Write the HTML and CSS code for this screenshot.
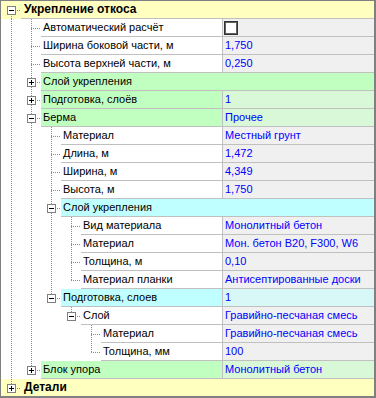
FILE: index.html
```html
<!DOCTYPE html>
<html lang="ru">
<head>
<meta charset="utf-8">
<title>Укрепление откоса</title>
<link rel="stylesheet" href="styles.css">
</head>
<body>
<div class="tree">
  <div class="row root">
    <span class="g f"><span class="box minus"></span></span>
    <div class="cell"><span class="name b">Укрепление откоса</span></div>
  </div>
  <div class="row">
    <span class="g v"></span><span class="g t"></span>
    <div class="cell"><span class="name">Автоматический расчёт</span><span class="val"><span class="chk"></span></span></div>
  </div>
  <div class="row">
    <span class="g v"></span><span class="g t"></span>
    <div class="cell"><span class="name">Ширина боковой части, м</span><span class="val">1,750</span></div>
  </div>
  <div class="row">
    <span class="g v"></span><span class="g t"></span>
    <div class="cell"><span class="name">Высота верхней части, м</span><span class="val">0,250</span></div>
  </div>
  <div class="row">
    <span class="g v"></span><span class="g t"><span class="box plus"></span></span>
    <div class="cell green"><span class="name">Слой укрепления</span></div>
  </div>
  <div class="row">
    <span class="g v"></span><span class="g t"><span class="box plus"></span></span>
    <div class="cell green"><span class="name">Подготовка, слоёв</span><span class="val">1</span></div>
  </div>
  <div class="row">
    <span class="g v"></span><span class="g t"><span class="box minus"></span></span>
    <div class="cell green"><span class="name">Берма</span><span class="val">Прочее</span></div>
  </div>
  <div class="row">
    <span class="g v"></span><span class="g v"></span><span class="g t"></span>
    <div class="cell"><span class="name">Материал</span><span class="val">Местный грунт</span></div>
  </div>
  <div class="row">
    <span class="g v"></span><span class="g v"></span><span class="g t"></span>
    <div class="cell"><span class="name">Длина, м</span><span class="val">1,472</span></div>
  </div>
  <div class="row">
    <span class="g v"></span><span class="g v"></span><span class="g t"></span>
    <div class="cell"><span class="name">Ширина, м</span><span class="val">4,349</span></div>
  </div>
  <div class="row">
    <span class="g v"></span><span class="g v"></span><span class="g t"></span>
    <div class="cell"><span class="name">Высота, м</span><span class="val">1,750</span></div>
  </div>
  <div class="row">
    <span class="g v"></span><span class="g v"></span><span class="g t"><span class="box minus"></span></span>
    <div class="cell cyan"><span class="name">Слой укрепления</span></div>
  </div>
  <div class="row">
    <span class="g v"></span><span class="g v"></span><span class="g v"></span><span class="g t"></span>
    <div class="cell"><span class="name">Вид материала</span><span class="val">Монолитный бетон</span></div>
  </div>
  <div class="row">
    <span class="g v"></span><span class="g v"></span><span class="g v"></span><span class="g t"></span>
    <div class="cell"><span class="name">Материал</span><span class="val">Мон. бетон В20, F300, W6</span></div>
  </div>
  <div class="row">
    <span class="g v"></span><span class="g v"></span><span class="g v"></span><span class="g t"></span>
    <div class="cell"><span class="name">Толщина, м</span><span class="val">0,10</span></div>
  </div>
  <div class="row">
    <span class="g v"></span><span class="g v"></span><span class="g v"></span><span class="g l"></span>
    <div class="cell"><span class="name">Материал планки</span><span class="val">Антисептированные доски</span></div>
  </div>
  <div class="row">
    <span class="g v"></span><span class="g v"></span><span class="g l"><span class="box minus"></span></span>
    <div class="cell cyan"><span class="name">Подготовка, слоев</span><span class="val">1</span></div>
  </div>
  <div class="row">
    <span class="g v"></span><span class="g v"></span><span class="g"></span><span class="g l"><span class="box minus"></span></span>
    <div class="cell"><span class="name">Слой</span><span class="val">Гравийно-песчаная смесь</span></div>
  </div>
  <div class="row">
    <span class="g v"></span><span class="g v"></span><span class="g"></span><span class="g"></span><span class="g t"></span>
    <div class="cell"><span class="name">Материал</span><span class="val">Гравийно-песчаная смесь</span></div>
  </div>
  <div class="row">
    <span class="g v"></span><span class="g v"></span><span class="g"></span><span class="g"></span><span class="g l"></span>
    <div class="cell"><span class="name">Толщина, мм</span><span class="val">100</span></div>
  </div>
  <div class="row">
    <span class="g v"></span><span class="g l"><span class="box plus"></span></span>
    <div class="cell green"><span class="name">Блок упора</span><span class="val">Монолитный бетон</span></div>
  </div>
  <div class="row root last">
    <span class="g l"><span class="box plus"></span></span>
    <div class="cell"><span class="name b">Детали</span></div>
  </div>
</div>
</body>
</html>
```

FILE: styles.css
```css
html, body {
  margin: 0;
  padding: 0;
  background: #ffffff;
}
.tree {
  box-sizing: border-box;
  width: 376px;
  height: 398px;
  border-style: solid;
  border-color: #808080;
  border-width: 1px 2px 2px 1px;
  background: #ffffff;
  font-family: "Liberation Sans", Arial, sans-serif;
  font-size: 11px;
  color: #000000;
  display: flex;
  flex-direction: column;
}
.row {
  display: flex;
  height: 18px;
  flex: none;
}
.row.last {
  height: 17px;
}
.root {
  background: #ffffc0;
}
.g {
  flex: none;
  width: 20px;
  height: 100%;
  display: flex;
  align-items: flex-start;
  background-repeat: no-repeat;
}
.g.v {
  background-image: repeating-linear-gradient(to bottom, #8c8c8c 0 1px, transparent 1px 2px);
  background-position: 10px 0;
  background-size: 1px 100%;
}
.g.t {
  background-image:
    repeating-linear-gradient(to bottom, #8c8c8c 0 1px, transparent 1px 2px),
    repeating-linear-gradient(to right, #8c8c8c 0 1px, transparent 1px 2px);
  background-position: 10px 0, 10px 9px;
  background-size: 1px 100%, 10px 1px;
}
.g.l {
  background-image:
    repeating-linear-gradient(to bottom, #8c8c8c 0 1px, transparent 1px 2px),
    repeating-linear-gradient(to right, #8c8c8c 0 1px, transparent 1px 2px);
  background-position: 10px 0, 10px 9px;
  background-size: 1px 9px, 10px 1px;
}
.g.f {
  background-image:
    repeating-linear-gradient(to bottom, #8c8c8c 0 1px, transparent 1px 2px),
    repeating-linear-gradient(to right, #8c8c8c 0 1px, transparent 1px 2px);
  background-position: 10px 9px, 10px 9px;
  background-size: 1px 9px, 10px 1px;
}
.box {
  box-sizing: border-box;
  width: 9px;
  height: 9px;
  margin: 5px 0 0 6px;
  border: 1px solid #808080;
  background-color: #ffffff;
  background-repeat: no-repeat;
}
.box.minus {
  background-image: linear-gradient(#000, #000);
  background-position: 1px 3px;
  background-size: 5px 1px;
}
.box.plus {
  background-image: linear-gradient(#000, #000), linear-gradient(#000, #000);
  background-position: 1px 3px, 3px 1px;
  background-size: 5px 1px, 1px 5px;
}
.cell {
  flex: 1;
  display: flex;
  height: 17px;
  border-bottom: 1px solid #c0c0c0;
  line-height: 17px;
  white-space: nowrap;
}
.last .cell {
  border-bottom: none;
}
.name {
  flex: 1;
  padding-left: 2px;
  overflow: hidden;
}
.name.b {
  font-weight: bold;
  font-size: 12px;
  padding-left: 3px;
}
.val {
  box-sizing: border-box;
  flex: none;
  width: 152px;
  border-left: 1px solid #c0c0c0;
  background: #f0f0f0;
  color: #0000ff;
  padding-left: 2px;
  overflow: hidden;
}
.green {
  background: #c0ffc0;
}
.green .val {
  background: #d8f8d8;
}
.cyan {
  background: #c0ffff;
}
.cyan .val {
  background: #d8f8f8;
}
.chk {
  display: block;
  box-sizing: border-box;
  width: 14px;
  height: 14px;
  margin-top: 2px;
  margin-left: -1px;
  border: 1px solid #333333;
  background: #ffffff;
  box-shadow: inset 0 0 0 1px #606060;
}
```
